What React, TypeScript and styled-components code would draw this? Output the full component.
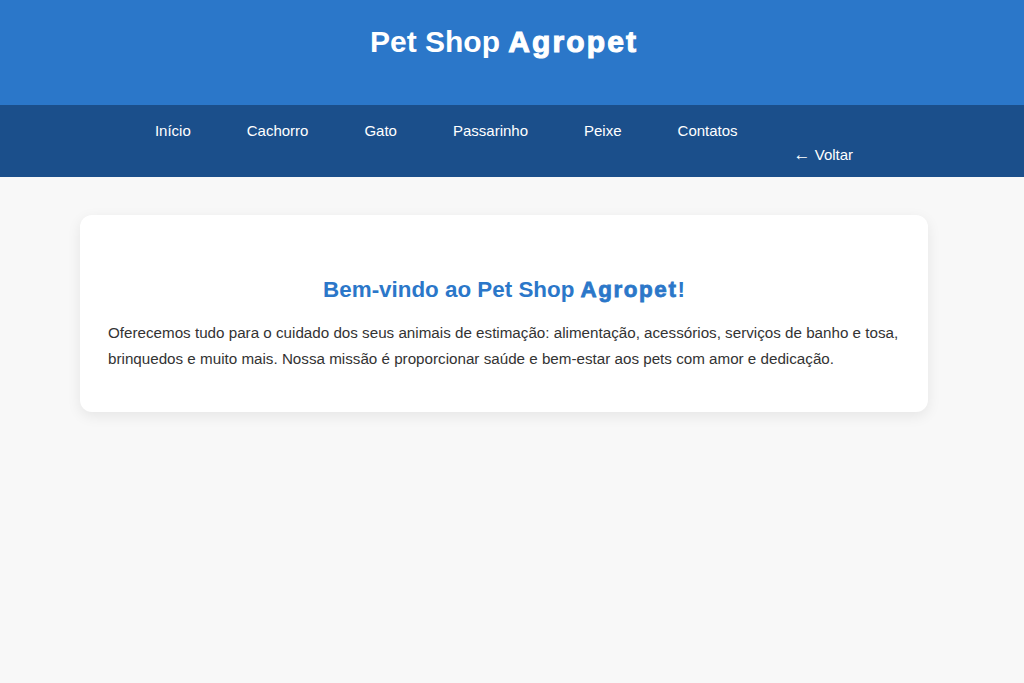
import React from 'react';
import styled, { createGlobalStyle } from 'styled-components';

// the reference was taken with a 16px scrollbar gutter, so content centres at 504
const GUTTER = 16;

const GlobalStyle = createGlobalStyle`
  html, body {
    margin: 0;
    padding: 0;
    background-color: #f8f8f8;
    font-family: "Liberation Sans", Arial, sans-serif;
    color: #333333;
  }
`;

const Page = styled.div`
  min-height: 100vh;
  background-color: #f8f8f8;
`;

const Header = styled.header`
  height: 105px;
  box-sizing: border-box;
  padding: 25px ${GUTTER}px 0 0;
  background-color: #2b77c9;
  text-align: center;
`;

const Title = styled.h1`
  margin: 0;
  font-size: 30px;
  font-weight: bold;
  color: #ffffff;
`;

// stands in for the heavier face the brand name uses
const Brand = styled.span`
  letter-spacing: 0.07em;
  -webkit-text-stroke: 0.035em currentColor;
`;

const NavBar = styled.nav`
  display: flex;
  justify-content: center;
  align-items: flex-start;
  padding: 14px ${GUTTER}px 10px 0;
  background-color: #1b4f8b;
`;

const NavLink = styled.a<{ $low?: boolean }>`
  display: block;
  padding: 0 28px;
  margin-top: ${(p) => (p.$low ? '24px' : '0')};
  font-size: 15px;
  line-height: 24px;
  color: #ffffff;
  text-decoration: none;
  cursor: pointer;
`;

const Arrow = styled.span`
  font-size: 17px;
`;

const Main = styled.main`
  padding: 38px ${GUTTER + 80}px 0 80px;
`;

const Card = styled.section`
  background-color: #ffffff;
  border-radius: 12px;
  box-shadow: 0 4px 14px rgba(0, 0, 0, 0.08);
  padding: 24px 28px;
`;

const Heading = styled.h2`
  margin: 38px 0 17px;
  font-size: 22.4px;
  font-weight: bold;
  color: #2b77c9;
  text-align: center;
`;

const Text = styled.p`
  margin: 0 0 17px;
  font-size: 15.2px;
  line-height: 1.68;
  color: #333333;
`;

const links = ['Início', 'Cachorro', 'Gato', 'Passarinho', 'Peixe', 'Contatos'];

const App: React.FC = () => {
  return (
    <Page>
      <GlobalStyle />
      <Header>
        <Title>
          Pet Shop <Brand>Agropet</Brand>
        </Title>
      </Header>
      <NavBar>
        {links.map((label) => (
          <NavLink key={label}>{label}</NavLink>
        ))}
        <NavLink $low>
          <Arrow>←</Arrow> Voltar
        </NavLink>
      </NavBar>
      <Main>
        <Card>
          <Heading>
            Bem-vindo ao Pet Shop <Brand>Agropet</Brand>!
          </Heading>
          <Text>
            Oferecemos tudo para o cuidado dos seus animais de estimação: alimentação, acessórios,
            serviços de banho e tosa, brinquedos e muito mais. Nossa missão é proporcionar saúde e
            bem-estar aos pets com amor e dedicação.
          </Text>
        </Card>
      </Main>
    </Page>
  );
};

export default App;
